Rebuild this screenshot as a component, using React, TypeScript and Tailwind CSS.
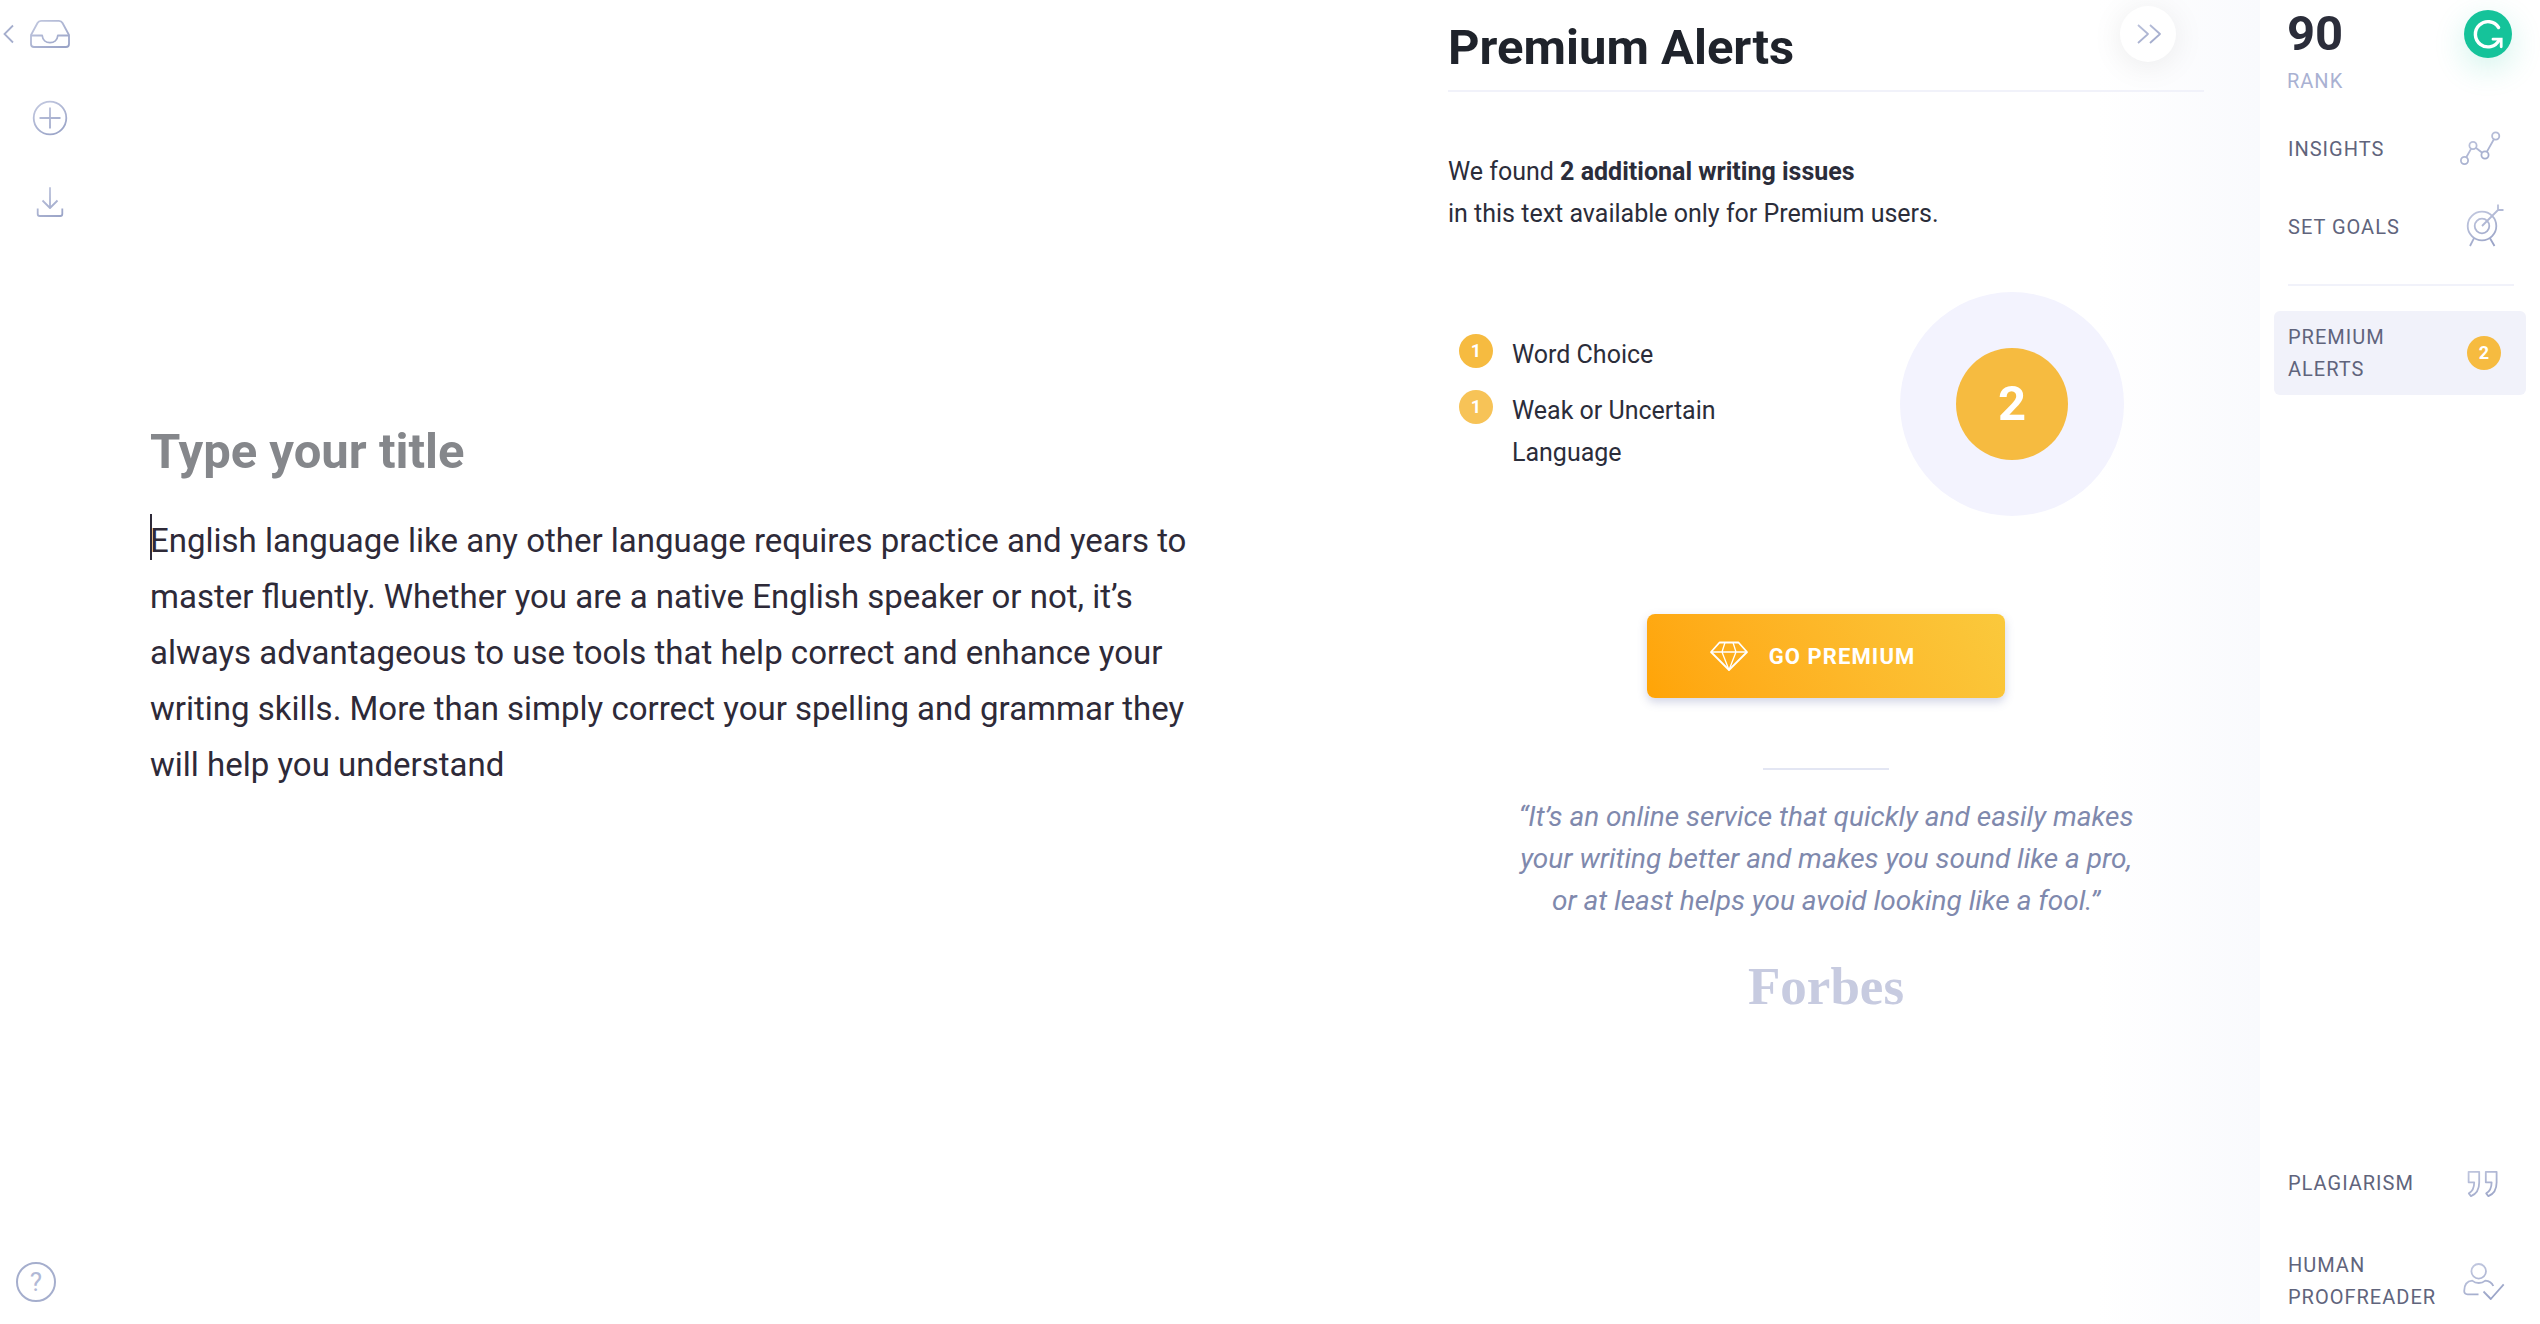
import type { ReactNode } from "react";

const TEXT =
  "English language like any other language requires practice and years to master fluently. Whether you are a native English speaker or not, it’s always advantageous to use tools that help correct and enhance your writing skills. More than simply correct your spelling and grammar they will help you understand";

const ISSUES = [
  { name: "Word Choice", count: 1, color: "bg-[#f6bb40]" },
  { name: "Weak or Uncertain Language", count: 1, color: "bg-[#f7c357]" },
];

function Icon({ children }: { children: ReactNode }) {
  return (
    <svg
      viewBox="0 0 48 48"
      className="size-12 shrink-0"
      fill="none"
      stroke="url(#ink)"
      strokeWidth="1.8"
      strokeLinejoin="round"
      aria-hidden="true"
    >
      {children}
    </svg>
  );
}

function GradientDefs() {
  return (
    <svg width="0" height="0" className="absolute" aria-hidden="true">
      <defs>
        <linearGradient id="ink" gradientUnits="userSpaceOnUse" x1="12" y1="6" x2="34" y2="42">
          <stop offset="0" stopColor="#c3c9e0" />
          <stop offset="1" stopColor="#98a2c6" />
        </linearGradient>
      </defs>
    </svg>
  );
}

function LeftRail() {
  return (
    <nav className="flex w-[100px] shrink-0 flex-col justify-between pt-[10px] pb-[18px]">
      <div className="flex flex-col gap-9">
        <div className="flex items-center">
          <button type="button" aria-label="Back" className="w-[26px]">
            <svg viewBox="0 0 26 48" className="h-12 w-[26px]" fill="none" stroke="#a5aecd" strokeWidth="1.8" aria-hidden="true">
              <path d="M13 15.5 4.5 24 13 32.5" />
            </svg>
          </button>
          <button type="button" aria-label="Documents">
            <Icon>
              <path d="M5 25 11.5 13Q12.6 10.9 15 10.9H33Q35.4 10.9 36.5 13L43 25V34Q43 37 40 37H8Q5 37 5 34Z" />
              <path d="M5 25.5H16.2C16.6 30 20 32.7 24 32.7S31.4 30 31.8 25.5H43" />
            </Icon>
          </button>
        </div>
        <button type="button" aria-label="New document" className="ml-[26px] w-12">
          <Icon>
            <circle cx="24" cy="24" r="16.3" />
            <path d="M24 13.5V34.5M13.5 24H34.5" />
          </Icon>
        </button>
        <button type="button" aria-label="Download" className="ml-[26px] w-12">
          <Icon>
            <path d="M24 9.3V30M16.5 22.5 24 30 31.5 22.5" />
            <path d="M11.7 30.5V36Q11.7 38 13.7 38H34.3Q36.3 38 36.3 36V30.5" />
          </Icon>
        </button>
      </div>
      <button
        type="button"
        className="mb-1 ml-4 flex size-10 items-center justify-center rounded-full border-2 border-[#a5aecd] text-[26px] leading-none text-[#b1b9d6]"
      >
        ?
      </button>
    </nav>
  );
}

function Editor() {
  return (
    <main className="flex-1 pt-[416px] pl-[50px]">
      <input
        aria-label="Title"
        placeholder="Type your title"
        className="block w-full max-w-[1060px] text-[49px] leading-[72px] font-bold text-[#1f232b] outline-none placeholder:text-[#85878b]"
      />
      <div className="relative mt-[25px] max-w-[1060px]">
        <textarea
          aria-label="Document text"
          defaultValue={TEXT}
          spellCheck={false}
          className="block field-sizing-content w-full resize-none text-[33px] leading-[56px] text-[#2e2a38] outline-none"
        />
        <span className="absolute top-px left-0 h-[46px] w-0.5 bg-[#2e2a38]" />
      </div>
    </main>
  );
}

function AlertsPanel() {
  return (
    <section className="w-[812px] shrink-0 bg-linear-to-r from-white from-80% to-[#f9fafd] pr-14">
      <header className="relative border-b-2 border-[#f1f2fa] pt-4 pb-[10px]">
        <h1 className="text-[49px] leading-[64px] font-bold text-[#1f232b]">Premium Alerts</h1>
        <button
          type="button"
          aria-label="Hide panel"
          className="absolute top-1.5 right-7 flex size-14 items-center justify-center rounded-full bg-white shadow-[0_4px_32px_rgba(0,0,0,0.08)]"
        >
          <Icon>
            <path d="M14 15 24 24 14 33M26 15 36 24 26 33" />
          </Icon>
        </button>
      </header>

      <p className="mt-[59px] text-[25px] leading-[42px] text-[#2b2d3a]">
        We found <strong>2 additional writing issues</strong>
        <br />
        in this text available only for Premium users.
      </p>

      <div className="mt-[57px] flex items-center justify-between pr-20 pl-[11px]">
        <ul className="flex w-[290px] flex-col gap-[14px]">
          {ISSUES.map((issue) => (
            <li key={issue.name} className="flex items-start gap-[19px]">
              <span
                className={`flex size-[34px] shrink-0 items-center justify-center rounded-full text-lg font-bold text-white ${issue.color}`}
              >
                {issue.count}
              </span>
              <span className="text-[25px] leading-[42px] text-[#2b2d3a]">{issue.name}</span>
            </li>
          ))}
        </ul>
        <div className="flex size-56 items-center justify-center rounded-full bg-[#f3f3fe]">
          <div className="flex size-28 items-center justify-center rounded-full bg-[#f6bb40] text-[49px] font-bold text-white">
            2
          </div>
        </div>
      </div>

      <div className="flex flex-col items-center">
        <button
          type="button"
          className="mt-[98px] flex h-[84px] w-[358px] items-center justify-center gap-4 rounded-lg bg-linear-60 from-[#ffa405] to-[#fac93c] pr-8 text-[22px] font-bold tracking-wider text-white shadow-[0_4px_10px_rgba(90,100,160,0.28)]"
        >
          <svg viewBox="0 0 48 48" className="size-12" fill="none" stroke="white" strokeWidth="1.8" strokeLinejoin="round" aria-hidden="true">
            <path d="M14.5 10.5H33.5L42 20 24 38 6 20Z" />
            <path d="M20 10.5 17 20 24 38 31 20 28 10.5M6 20H42" strokeWidth="1.3" />
          </svg>
          GO PREMIUM
        </button>
        <hr className="mt-[70px] w-[126px] border-t-2 border-[#e3e6f3]" />
        <blockquote className="mt-[26px] text-center text-[28px] leading-[42px] text-[#7f89ad] italic">
          “It’s an online service that quickly and easily makes
          <br />
          your writing better and makes you sound like a pro,
          <br />
          or at least helps you avoid looking like a fool.”
        </blockquote>
        <p className="mt-9 font-['Liberation_Serif',serif] text-[53px] leading-[56px] font-bold text-[#c7cbe0]">
          Forbes
        </p>
      </div>
    </section>
  );
}

function SideItem({ label, children }: { label: string; children: ReactNode }) {
  return (
    <button
      type="button"
      className="flex w-full items-center justify-between pr-8 text-left text-xl leading-8 tracking-wider text-[#60647c]"
    >
      <span className="w-[140px]">{label}</span>
      {children}
    </button>
  );
}

function RightSidebar() {
  return (
    <aside className="flex w-[280px] shrink-0 flex-col justify-between pt-1.5 pb-[11px]">
      <div>
        <div className="flex items-start justify-between pr-7 pl-[27px]">
          <div>
            <p className="text-[49px] leading-[56px] font-bold text-[#2b2d3a]">90</p>
            <p className="mt-[3px] text-xl leading-8 tracking-wider text-[#a9b1d2]">RANK</p>
          </div>
          <button
            type="button"
            aria-label="Grammarly"
            className="mt-1 rounded-full bg-[#15c39a] shadow-[0_10px_32px_rgba(21,195,154,0.2)]"
          >
            <svg viewBox="0 0 48 48" className="size-12" fill="none" stroke="white" strokeWidth="3.4" strokeLinecap="round" aria-hidden="true">
              <path d="M34.6 17.5A12.6 12.6 0 1 0 35.2 30" />
              <path d="M29 29.2H37.2V36.8" strokeWidth="2.8" strokeLinejoin="miter" />
            </svg>
          </button>
        </div>
        <div className="mt-7 flex flex-col gap-[30px] pl-7">
          <SideItem label="INSIGHTS">
            <Icon>
              <circle cx="4.5" cy="35.5" r="3.6" />
              <circle cx="13" cy="20.5" r="3.6" />
              <circle cx="25" cy="30" r="3.6" />
              <circle cx="35.7" cy="11" r="3.6" />
              <path d="M6.3 32.3 11.2 23.6M15.8 22.8 22.2 27.8M26.8 26.9 33.9 14.2" />
            </Icon>
          </SideItem>
          <SideItem label="SET GOALS">
            <Icon>
              <circle cx="22" cy="23" r="14.3" />
              <circle cx="22" cy="23" r="7.3" />
              <path d="M22 23 38 7M38 1.5V7H43.5M14 35.2 10 43M30 35.2 34.5 43" />
            </Icon>
          </SideItem>
        </div>
        <hr className="mt-[33px] mr-[26px] ml-7 border-t-2 border-[#f1f2fa]" />
        <button
          type="button"
          className="mt-[25px] ml-[14px] flex w-[252px] items-center justify-between rounded-md bg-[#f1f2fa] py-[10px] pr-[25px] pl-[14px] text-left text-xl leading-8 tracking-wider text-[#60647c]"
        >
          <span className="w-[120px]">PREMIUM ALERTS</span>
          <span className="flex size-[34px] items-center justify-center rounded-full bg-[#f6bb40] text-lg font-bold tracking-normal text-white">
            2
          </span>
        </button>
      </div>
      <div className="flex flex-col gap-[42px] pl-7">
        <SideItem label="PLAGIARISM">
          <Icon>
            <path d="M8.6 12.8H19.2V23.5C19.2 30.5 15.8 35.2 11 37.2L8.8 34.4C12 32.6 14.2 29.5 14.2 23.3H8.6Z" />
            <path d="M25.8 12.8H36.6V23.5C36.6 30.5 33.2 35.2 28.4 37.2L26.2 34.4C29.4 32.6 31.6 29.5 31.6 23.3H25.8Z" />
          </Icon>
        </SideItem>
        <SideItem label="HUMAN PROOFREADER">
          <Icon>
            <circle cx="18.7" cy="14.3" r="7.3" />
            <path d="M18.5 37.3H7.5Q4.2 37.3 4.2 34C4.2 27.5 7.5 24 12.2 23.6 16 26.8 21.5 26.8 25.3 23.6 29.5 24 31.8 25.5 33.3 29" />
            <path d="M23.5 34.5 30.8 42 43.7 27.3" />
          </Icon>
        </SideItem>
      </div>
    </aside>
  );
}

export default function App() {
  return (
    <div className="flex min-h-screen bg-white font-[Roboto,sans-serif]">
      <GradientDefs />
      <LeftRail />
      <Editor />
      <AlertsPanel />
      <RightSidebar />
    </div>
  );
}
